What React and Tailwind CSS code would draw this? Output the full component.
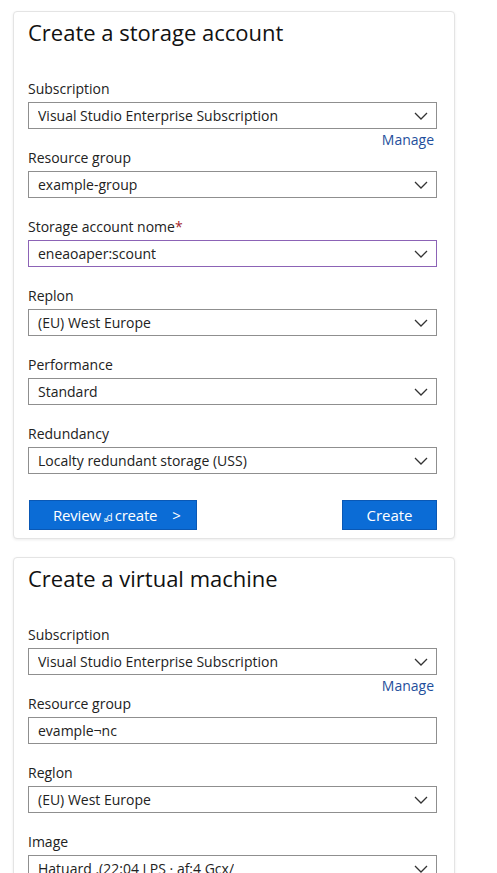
import { useState } from 'react';

const font = { fontFamily: '"Open Sans", "Liberation Sans", sans-serif' };

function Chevron() {
  return (<svg width="14" height="8" viewBox="0 0 14 8" fill="none" className="shrink-0">
      <path d="M1 1l6 6 6-6" stroke="#333" strokeWidth="1.3"/>
    </svg>);
}

function Field({ label, value, required, chevron = true, tone = 'gray', manage = false }) {
  const border = tone === 'purple' ? 'border-[#8c63b6]' : 'border-[#8f8f8f]';
  return (<div>
      <div className="text-[14px] leading-[20px] text-[#222]">
        {label}
        {required && <span className="text-[#a4262c]">*</span>}
      </div>
      <div className={`mt-[3px] h-[27px] border ${border} bg-white flex items-center justify-between pl-[9px] pr-[8px]`}>
        <span className="text-[14px] text-[#222] truncate">{value}</span>
        {chevron && <Chevron/>}
      </div>
      {manage && (<div className="mt-[3px] pr-[3px] text-right text-[14px] leading-[16px] text-[#1f4f9c]">Manage</div>)}
    </div>);
}

function Card({ title, children }) {
  return (<div className="w-[442px] border border-[#e4e4e4] rounded-[4px] shadow-[0_1px_3px_rgba(0,0,0,0.08)] bg-white pl-[14px] pr-[17px] pt-[6px]">
      <h2 className="text-[22px] leading-[28px] text-[#111]">{title}</h2>
      {children}
    </div>);
}

export default function App() {
  const [sub] = useState('Visual Studio Enterprise Subscription');
  return (<div className="bg-white pl-[13px] pt-[11px] flex flex-col gap-[18px] overflow-hidden h-[873px]" style={font}>
      <Card title="Create a storage account">
        <div className="mt-[33px] flex flex-col">
          <Field label="Subscription" value={sub} manage/>
          <div className="flex flex-col gap-[19px]">
            <Field label="Resource group" value="example-group"/>
            <Field label="Storage account nome" required value="eneaoaper:scount" tone="purple"/>
            <Field label="Replon" value="(EU) West Europe"/>
            <Field label="Performance" value="Standard"/>
            <Field label="Redundancy" value="Localty redundant storage (USS)"/>
          </div>
        </div>
        <div className="mt-[26px] mb-[8px] flex items-center justify-between">
          <button className="ml-[1px] w-[168px] h-[30px] bg-[#0b6cd6] border border-[#0a58b5] text-white text-[15px] flex items-center justify-center gap-[15px] pl-[8px]">
            <span className="tracking-[-0.2px]">Review<span className="text-[10px] tracking-[-1px] mx-[3px]">ₐd</span>create</span>
            <span className="text-[15px]">&gt;</span>
          </button>
          <button className="w-[95px] h-[30px] bg-[#0b6cd6] border border-[#0a58b5] text-white text-[15px]">
            Create
          </button>
        </div>
      </Card>
      <Card title="Create a virtual machine">
        <div className="mt-[33px] flex flex-col">
          <Field label="Subscription" value={sub} manage/>
          <div className="flex flex-col gap-[19px]">
            <Field label="Resource group" value="evample¬nc" chevron={false}/>
            <Field label="Reglon" value="(EU) West Europe"/>
            <Field label="Image" value="Hatuard .(22:04 LPS ·  af:4 Gcx/"/>
          </div>
        </div>
      </Card>
    </div>);
}
